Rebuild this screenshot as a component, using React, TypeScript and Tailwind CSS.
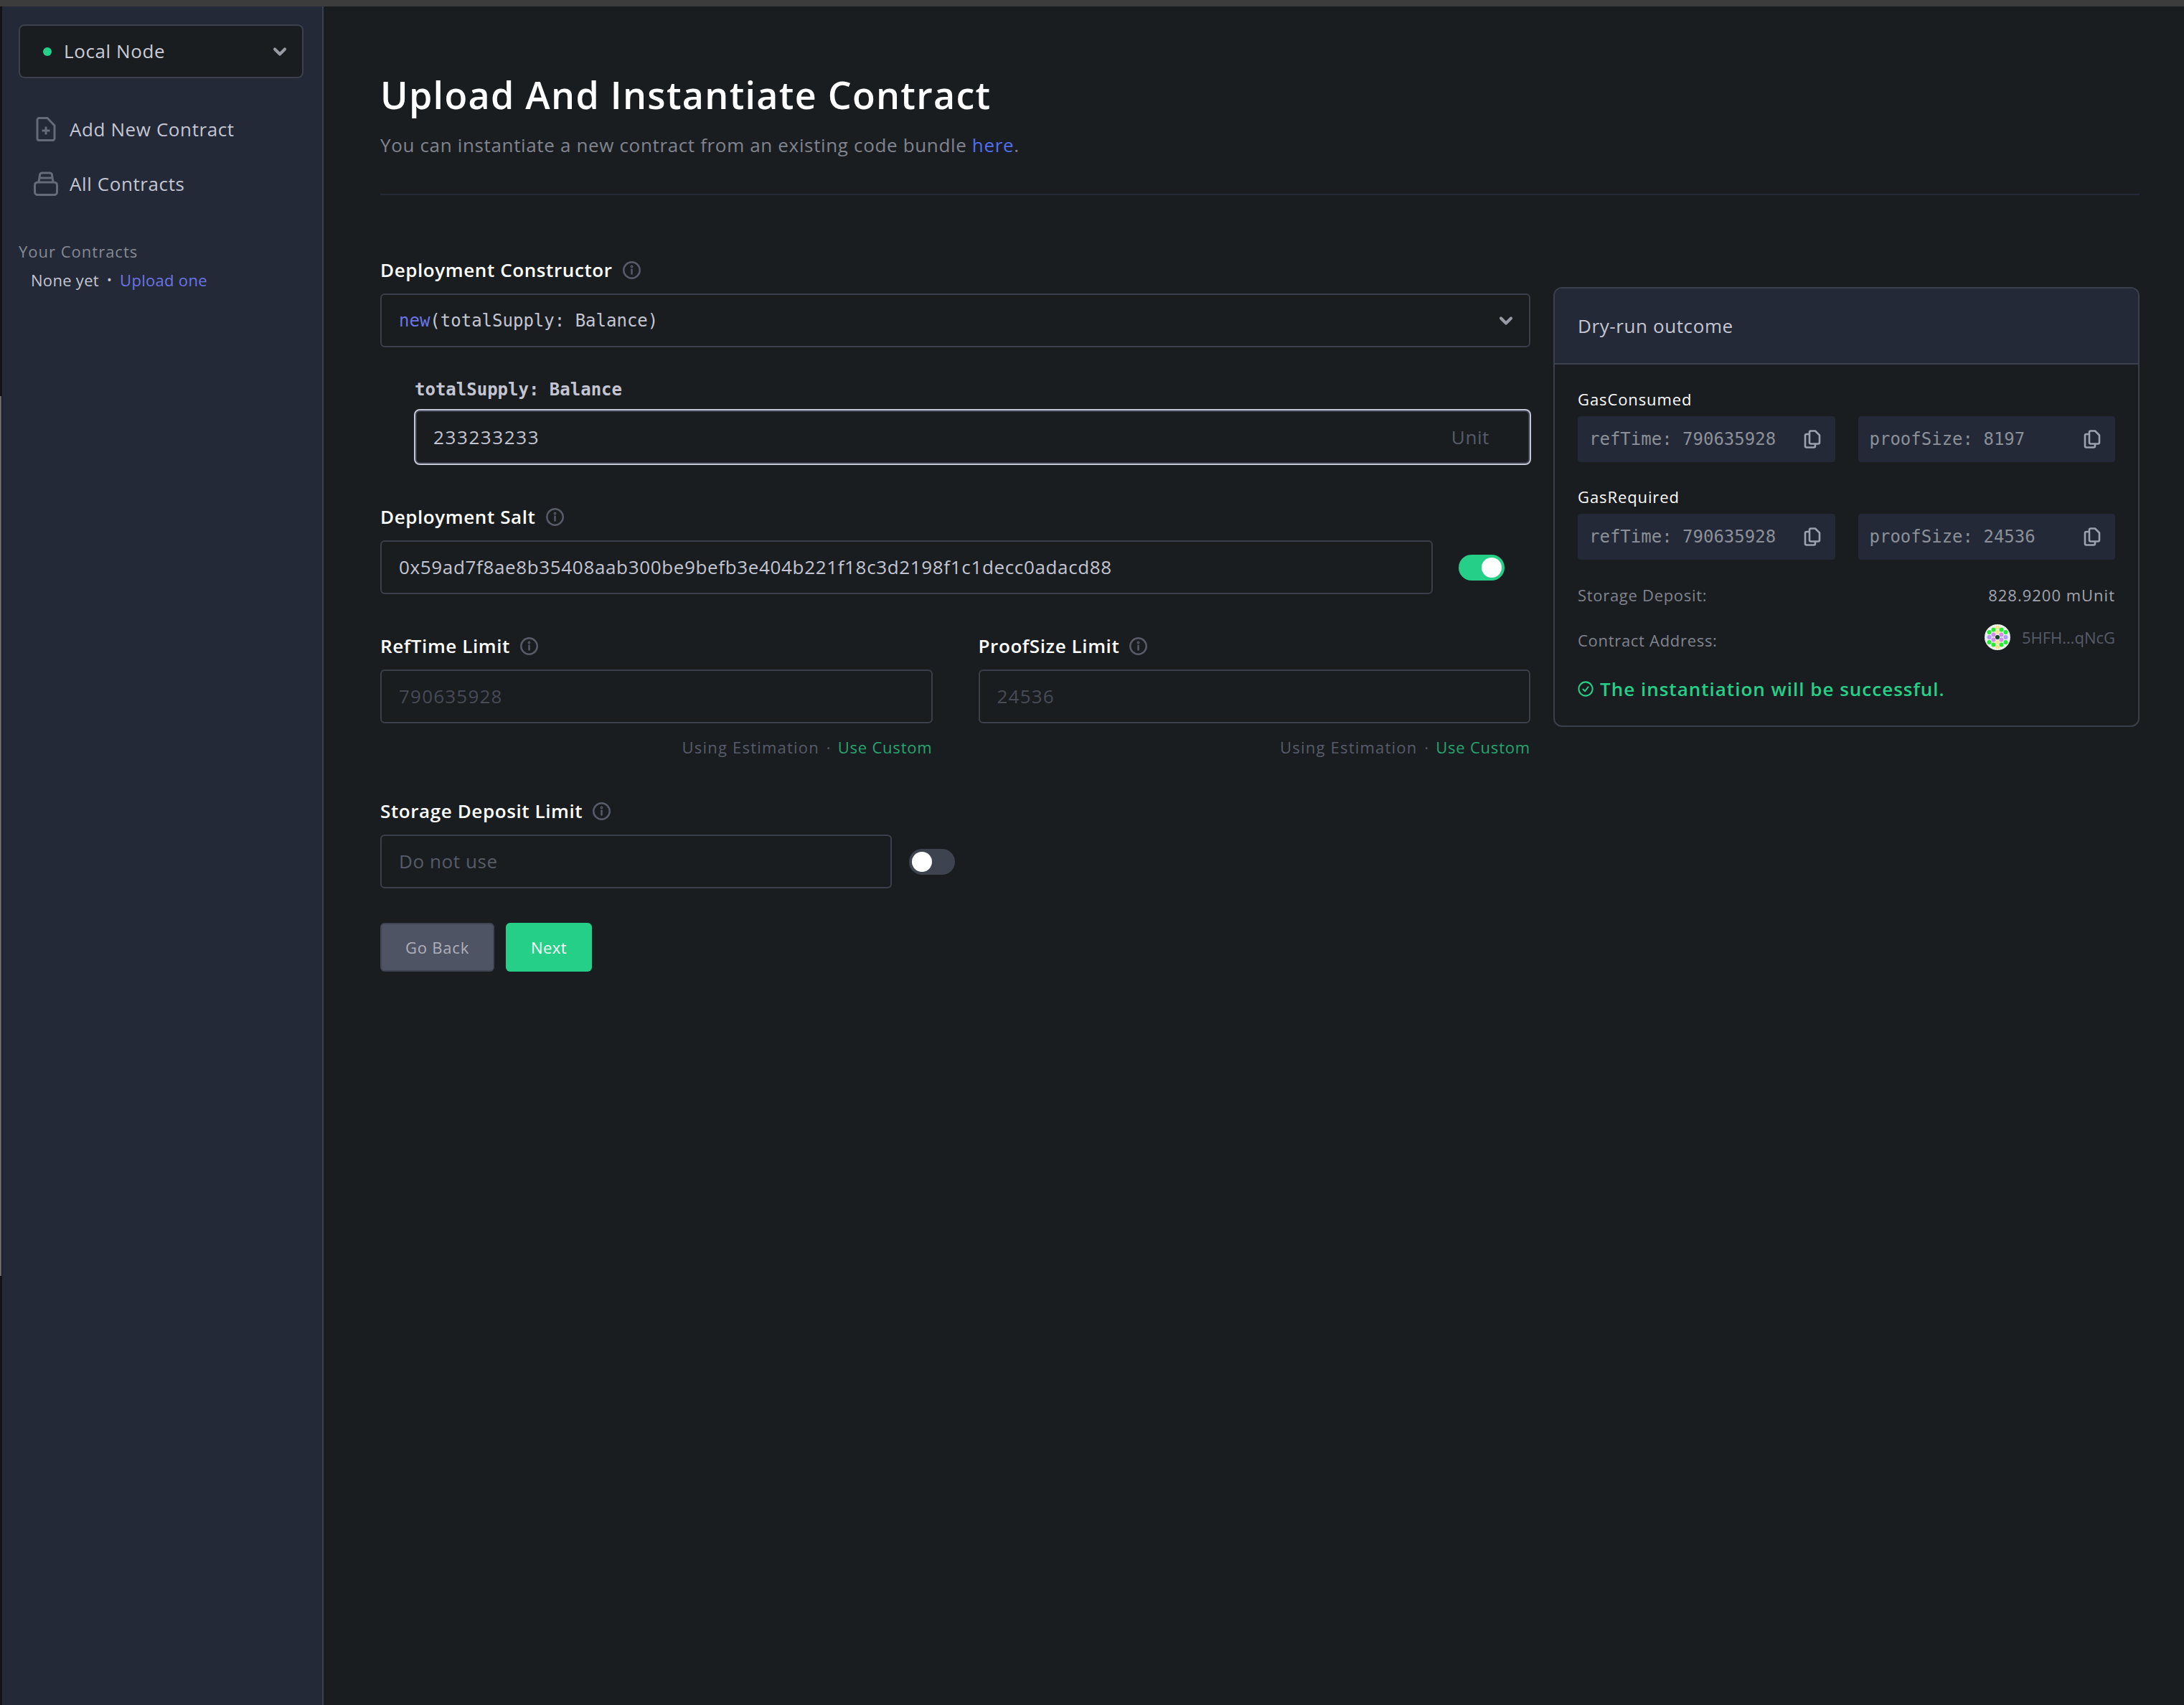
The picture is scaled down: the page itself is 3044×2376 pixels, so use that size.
import { FC, ReactNode } from 'react';
import { ChevronDown } from 'lucide-react';

const sans = 'font-["Open_Sans",sans-serif]';
const mono = 'font-["DejaVu_Sans_Mono",monospace]';

const InfoIcon: FC<{}> = () => (
    <svg className="w-[27px] h-[27px] text-[#565c69]" viewBox="0 0 24 24" fill="none" stroke="currentColor" strokeWidth="2.2">
        <circle cx="12" cy="12" r="10" />
        <path d="M12 11v5.5" strokeLinecap="round" />
        <circle cx="12" cy="7.5" r="0.6" />
    </svg>
);

const CopyIcon: FC<{}> = () => (
    <svg className="w-[24px] h-[26px] text-[#9ca3af] shrink-0" viewBox="0 0 24 26" fill="none" stroke="currentColor" strokeWidth="2.6" strokeLinejoin="round">
        <path d="M8 3.5a2 2 0 0 1 2-2h6l6 6v10a2 2 0 0 1-2 2H10a2 2 0 0 1-2-2z" />
        <path d="M8 6H4a2 2 0 0 0-2 2v14.5a2 2 0 0 0 2 2h10a2 2 0 0 0 2-2V19" />
    </svg>
);

const Label: FC<{ children: ReactNode }> = ({ children }) => (
    <div className="flex items-center gap-[13px] h-[32px] mb-[17px]">
        <span className="text-[26px] font-semibold tracking-[0.6px] text-white">{ children }</span>
        <InfoIcon />
    </div>
);

const Toggle: FC<{ on?: boolean }> = ({ on }) => (
    <div className={ on
        ? 'flex items-center justify-end w-[64px] h-[36px] rounded-full bg-[#25cf88] px-[4px] shrink-0'
        : 'flex items-center justify-start w-[64px] h-[36px] rounded-full bg-[#3d434f] px-[4px] shrink-0' }>
        <div className="w-[28px] h-[28px] rounded-full bg-white" />
    </div>
);

const Chip: FC<{ text: string }> = ({ text }) => (
    <div className={ `flex flex-1 items-center justify-between h-[64px] rounded-[4px] bg-[#232936] pl-[16px] pr-[20px] text-[24px] text-[#8b9099] ${ mono }` }>
        <span>{ text }</span>
        <CopyIcon />
    </div>
);

const dots: [number, number, string][] = [
    [18, 4.5, '#fbe38e'], [6.5, 11, '#22ee33'], [12.5, 7.5, '#22ee33'], [23.5, 7.5, '#22ee33'], [29.5, 11, '#22ee33'],
    [12.5, 14.5, '#d38cf2'], [18, 11, '#fbe38e'], [23.5, 14.5, '#d38cf2'], [6.5, 18, '#a99cfb'], [29.5, 18, '#a99cfb'],
    [18, 18, '#0d4a24'], [12.5, 21.5, '#d38cf2'], [23.5, 21.5, '#d38cf2'], [6.5, 25, '#22ee33'], [29.5, 25, '#22ee33'],
    [12.5, 28.5, '#22ee33'], [23.5, 28.5, '#22ee33'], [18, 25, '#fbe38e'], [18, 31.5, '#fbe38e']
];

const Identicon: FC<{}> = () => (
    <svg className="w-[36px] h-[36px]" viewBox="0 0 36 36">
        <circle cx="18" cy="18" r="18" fill="#eeeeee" />
        { dots.map((d, index) => <circle key={ index } cx={ d[0] } cy={ d[1] } r="3" fill={ d[2] } />) }
    </svg>
);

const Hint: FC<{}> = () => (
    <div className="flex justify-end items-center h-[28px] mt-[19px] text-[22px]">
        <span className="text-[#565c69] tracking-[1.2px]">Using Estimation</span>
        <span className="text-[#565c69] mx-[10px]">·</span>
        <span className="text-[#25a56f] tracking-[0.8px]">Use Custom</span>
    </div>
);

const inputBox = 'flex items-center h-[75px] rounded-[6px] border-2 border-[#3a404c] px-[24px] text-[26px]';

export default function App()
{
    return (
        <div className={ `flex flex-col min-h-screen bg-[#1a1d20] ${ sans }` }>
            <div className="h-[9px] bg-[#3c3c3c]" />
            <div className="flex flex-1">
                <div className="w-[3px] pt-[543px] bg-[#111316]">
                    <div className="w-[2px] h-[1226px] bg-[#6a6a6a]" />
                </div>
                <aside className="w-[448px] border-r-2 border-[#3a404c] bg-[#232936] pt-[25px] px-[23px]">
                    <div className="flex items-center justify-between h-[75px] w-[397px] rounded-[8px] border-2 border-[#3a404c] bg-[#1a1d20] pl-[32px] pr-[17px]">
                        <div className="flex items-center gap-[17px]">
                            <div className="w-[12px] h-[12px] rounded-full bg-[#25d08a]" />
                            <span className="text-[26px] tracking-[0.6px] text-[#c9ccd6]">Local Node</span>
                        </div>
                        <ChevronDown className="w-[28px] h-[28px] text-[#9a9aa4]" strokeWidth={ 3.5 } />
                    </div>
                    <div className="flex items-center h-[34px] mt-[54px] pl-[24px] gap-[19px]">
                        <svg className="w-[28px] h-[34px] text-[#666b78]" viewBox="0 0 28 34" fill="none" stroke="currentColor" strokeWidth="3" strokeLinejoin="round">
                            <path d="M2 4a2.5 2.5 0 0 1 2.5-2.5H16L26 12v18a2.5 2.5 0 0 1-2.5 2.5h-19A2.5 2.5 0 0 1 2 30z" />
                            <path d="M14 13.5v11M8.5 19h11" />
                        </svg>
                        <span className="text-[26px] font-medium tracking-[0.6px] text-[#c3c6d2]">Add New Contract</span>
                    </div>
                    <div className="flex items-center h-[34px] mt-[42px] pl-[21px] gap-[16px]">
                        <svg className="w-[34px] h-[34px] text-[#666b78]" viewBox="0 0 34 34" fill="none" stroke="currentColor" strokeWidth="3" strokeLinejoin="round">
                            <rect x="1.5" y="15" width="31" height="17.5" rx="4" />
                            <path d="M7 15l1.5-10a3 3 0 0 1 3-3h11a3 3 0 0 1 3 3L27 15" />
                            <path d="M8 9h18" />
                        </svg>
                        <span className="text-[26px] font-medium tracking-[0.6px] text-[#c3c6d2]">All Contracts</span>
                    </div>
                    <div className="mt-[63px] h-[28px] flex items-center text-[22px] tracking-[1px] text-[#868a94]">Your Contracts</div>
                    <div className="mt-[12px] h-[28px] flex items-center pl-[17px] text-[22px] tracking-[0.3px] text-[#c3c6d2]">
                        None yet
                        <span className="mx-[11px] text-[18px]">•</span>
                        <span className="text-[#6b75e6]">Upload one</span>
                    </div>
                </aside>
                <main className="flex-1 pl-[79px] pr-[62px] pt-[91px]">
                    <h1 className="text-[52px] leading-[64px] font-semibold tracking-[1.3px] text-white">Upload And Instantiate Contract</h1>
                    <p className="mt-[20px] text-[26px] leading-[36px] tracking-[0.65px] text-[#80848e]">
                        You can instantiate a new contract from an existing code bundle <span className="text-[#4f6ef0]">here</span>.
                    </p>
                    <div className="mt-[50px] border-t-2 border-[#232936]" />
                    <div className="flex gap-[32px] mt-[88px]">
                        <div className="w-[1603px]">
                            <div>
                                <Label>Deployment Constructor</Label>
                                <div className={ `${ inputBox } justify-between pr-[18px]` }>
                                    <span className={ `${ mono } text-[24px] text-[#c3c6d2]` }>
                                        <span className="text-[#6b75e6]">new</span>(totalSupply: Balance)
                                    </span>
                                    <ChevronDown className="w-[28px] h-[28px] text-[#9a9aa4]" strokeWidth={ 3.5 } />
                                </div>
                            </div>
                            <div className="pl-[47px] mt-[43px]">
                                <div className={ `${ mono } h-[32px] mb-[11px] flex items-center text-[24px] font-bold pl-[1px] text-[#c3c6d2]` }>totalSupply: Balance</div>
                                <div className="flex items-center justify-between w-[1557px] h-[78px] rounded-[8px] border-2 border-[#c3c7d6] shadow-[inset_0_0_0_2px_#3a404c] pl-[25px] pr-[56px] text-[26px]">
                                    <span className="tracking-[1.6px] text-[#c3c6d2]">233233233</span>
                                    <span className="tracking-[0.6px] text-[#565c69]">Unit</span>
                                </div>
                            </div>
                            <div className="mt-[56px]">
                                <Label>Deployment Salt</Label>
                                <div className="flex items-center gap-[36px]">
                                    <div className={ `${ inputBox } w-[1467px] text-[#c3c6d2] tracking-[0.65px]` }>0x59ad7f8ae8b35408aab300be9befb3e404b221f18c3d2198f1c1decc0adacd88</div>
                                    <Toggle on />
                                </div>
                            </div>
                            <div className="flex gap-[64px] mt-[56px]">
                                <div className="flex-1">
                                    <Label>RefTime Limit</Label>
                                    <div className={ `${ inputBox } text-[#464b56] tracking-[1.2px]` }>790635928</div>
                                    <Hint />
                                </div>
                                <div className="flex-1">
                                    <Label>ProofSize Limit</Label>
                                    <div className={ `${ inputBox } text-[#464b56] tracking-[1.2px]` }>24536</div>
                                    <Hint />
                                </div>
                            </div>
                            <div className="mt-[59px]">
                                <Label>Storage Deposit Limit</Label>
                                <div className="flex items-center gap-[24px]">
                                    <div className={ `${ inputBox } w-[713px] text-[#565c69] tracking-[0.6px]` }>Do not use</div>
                                    <Toggle />
                                </div>
                            </div>
                            <div className="flex gap-[16px] mt-[48px]">
                                <div className="flex items-center justify-center w-[159px] h-[68px] rounded-[6px] border-2 border-[#3f4552] bg-[#4e5463] text-[22px] font-medium tracking-[0.8px] text-[#aeb1bb]">Go Back</div>
                                <div className="flex items-center justify-center w-[120px] h-[68px] rounded-[6px] bg-[#25cf88] text-[22px] font-medium tracking-[0.4px] text-white">Next</div>
                            </div>
                        </div>
                        <div className="w-[817px] h-[613px] mt-[40px] rounded-[12px] border-2 border-[#3a404c] overflow-hidden">
                            <div className="flex items-center h-[106px] px-[32px] bg-[#232936] border-b-2 border-[#3a404c] text-[26px] tracking-[0.6px] text-[#c3c6d2]">Dry-run outcome</div>
                            <div className="px-[32px] pt-[34px]">
                                <div className="h-[28px] mb-[10px] flex items-center text-[22px] tracking-[0.9px] text-white">GasConsumed</div>
                                <div className="flex gap-[32px]">
                                    <Chip text="refTime: 790635928" />
                                    <Chip text="proofSize: 8197" />
                                </div>
                                <div className="h-[28px] mt-[34px] mb-[10px] flex items-center text-[22px] tracking-[0.9px] text-white">GasRequired</div>
                                <div className="flex gap-[32px]">
                                    <Chip text="refTime: 790635928" />
                                    <Chip text="proofSize: 24536" />
                                </div>
                                <div className="flex items-center justify-between h-[28px] mt-[35px] text-[22px]">
                                    <span className="tracking-[0.7px] text-[#80848e]">Storage Deposit:</span>
                                    <span className="tracking-[1px] text-[#a0a4ad]">828.9200 mUnit</span>
                                </div>
                                <div className="flex items-center justify-between h-[36px] mt-[27px] text-[22px]">
                                    <span className="tracking-[0.7px] text-[#80848e] mt-[8px]">Contract Address:</span>
                                    <div className="flex items-center gap-[16px]">
                                        <Identicon />
                                        <span className="text-[#565c69]">5HFH…qNcG</span>
                                    </div>
                                </div>
                                <div className="flex items-center gap-[9px] h-[32px] mt-[38px] text-[26px] font-semibold tracking-[1px] text-[#25cf88]">
                                    <svg className="w-[22px] h-[22px]" viewBox="0 0 24 24" fill="none" stroke="currentColor" strokeWidth="2.2" strokeLinecap="round" strokeLinejoin="round">
                                        <circle cx="12" cy="12" r="10.5" />
                                        <path d="M8 12.5l3 3 5-6.5" />
                                    </svg>
                                    The instantiation will be successful.
                                </div>
                            </div>
                        </div>
                    </div>
                </main>
            </div>
        </div>
    );
}
